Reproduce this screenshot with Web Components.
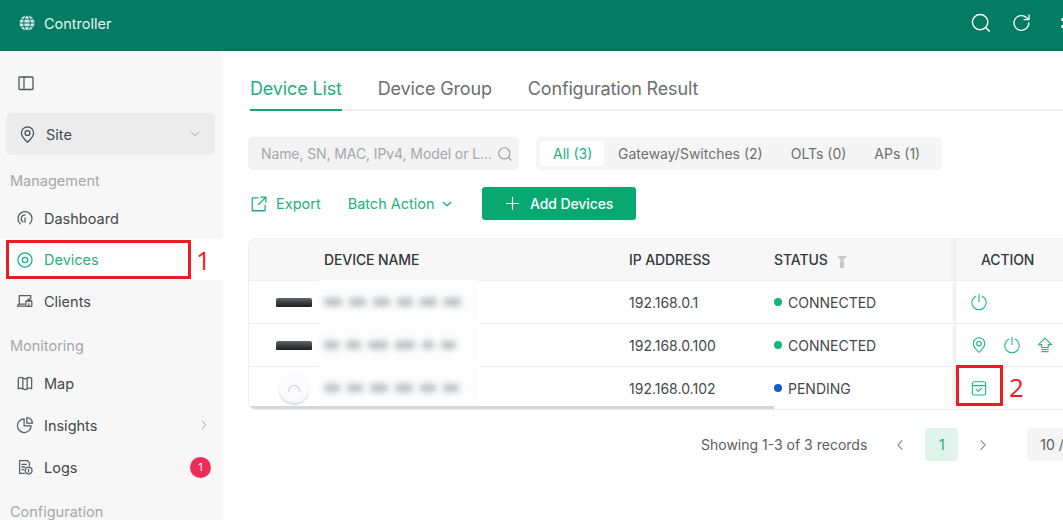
<!DOCTYPE html>
<html lang="en"><head><meta charset="utf-8"><title>Controller</title>
<style>
html,body{margin:0;padding:0;height:520px;overflow:hidden;background:#fff}
body{font-family:Inter,"Noto Sans",sans-serif;color:#3f4447}
</style></head><body>
<app-shell>
  <app-header slot="header"></app-header>
  <side-nav slot="nav"></side-nav>
  <device-page slot="main"></device-page>
</app-shell>
<script>
const P={
 panel:'<rect x="3" y="4" width="14" height="12.5" rx=".8"/><path d="M8 4v12.5"/>',
 pin:'<path d="M10 18.2C6 14.6 3.6 11.6 3.6 8.4a6.4 6.4 0 0 1 12.8 0c0 3.2-2.4 6.2-6.4 9.8z"/><circle cx="10" cy="8.4" r="2.6"/>',
 gauge:'<path d="M5 16.6A7.8 7.8 0 1 1 15 16.6"/><path d="M7.6 14.2A4.2 4.2 0 0 1 10 6.6"/><path d="M10 10v4.6"/>',
 target:'<circle cx="10" cy="10" r="7.8"/><circle cx="10" cy="10" r="3"/>',
 clients:'<path d="M3.6 13.5V4h12.8v3.5"/><path d="M1.8 15.8h8"/><path d="M1.8 15.8c0-1 .6-2.2 1.8-2.3h6"/><rect x="11" y="10" width="6.6" height="6" rx=".5"/><path d="M13.4 10V8h1.8v2M14.3 13v3"/>',
 map:'<path d="M2.6 4.4c2-.9 3.6-.9 5 0 0 0 1.500 1 2.400 1s2.400-1 2.400-1c1.400-.9 3-.9 5 0v12c-2-.9-3.600-.9-5 0 0 0-1.500 1-2.400 1s-2.400-1-2.400-1c-1.400-.9-3-.9-5 0z"/><path d="M7.600 4.400v12M12.400 4.400v12"/>',
 pie:'<path d="M9 3.200a7.600 7.600 0 1 0 7.800 7.800H9z"/><path d="M12 1.800a6.200 6.200 0 0 1 6.200 6.200H12z"/>',
 logs:'<path d="M9 17.200H4V2.800h8.600l2.400 2.600v3"/><path d="M6.600 7h5M6.600 10h3M6.600 13h1.800"/><circle cx="14" cy="14" r="3.800"/><path d="M14 12.600v3M13.400 12.800h.6"/>',
 search:'<circle cx="9.200" cy="9.200" r="7"/><path d="M14.400 14.400l3.200 3.200"/>',
 refresh:'<path d="M16.800 10A7.400 7.400 0 1 1 14.600 4.700l2 1.700"/><path d="M17 1.800v4.900h-4.900"/>',
 export:'<path d="M9 3.300H2.500v14.200h14.300v-6"/><path d="M9.500 10.500l8-8M12 2.300h5.700V8"/>',
 down:'<path d="M4.500 7.500l5.500 5 5.500-5"/>',
 right:'<path d="M7.500 4.500l5 5.500-5 5.500"/>',
 left:'<path d="M12.500 4.500l-5 5.500 5 5.500"/>',
 plus:'<path d="M10 3v14M3 10h14"/>',
 power:'<path d="M6.300 3.500a8 8 0 1 0 7.400 0"/><path d="M10 1.600v8"/>',
 upgrade:'<path d="M10 2.400l7.200 7.200h-3.600v3.200H6.400V9.600H2.800z"/><path d="M6.400 15h7.200M6.400 17.400h7.200"/>',
 confirm:'<rect x="2.600" y="3" width="14.800" height="14.800" rx="2.200"/><path d="M2.600 7.400h14.800" /><path d="M6.800 11.500l2.400 2.300 4-3.600"/>',
 globe:'<circle cx="10" cy="10" r="8.400" fill="currentColor" stroke="none"/><g stroke="#047b63" stroke-width="1.100"><path d="M1.800 10h16.400M3 5.800h14M3 14.200h14"/><ellipse cx="10" cy="10" rx="3.600" ry="8.400"/></g>'
};
class XIcon extends HTMLElement{
 connectedCallback(){
  if(this.shadowRoot)return;
  const s=this.getAttribute('size')||18,w=this.getAttribute('w')||1.4;
  this.attachShadow({mode:'open'}).innerHTML=`<style>:host{display:inline-flex;flex:none;width:${s}px;height:${s}px}svg{display:block;width:100%;height:100%}</style><svg viewBox="0 0 20 20" fill="none" stroke="currentColor" stroke-width="${w}" stroke-linecap="round" stroke-linejoin="round">${P[this.getAttribute('name')]}</svg>`;
 }
}
customElements.define('x-icon',XIcon);

class AppShell extends HTMLElement{
 constructor(){super();this.attachShadow({mode:'open'}).innerHTML=`<style>
 :host{display:grid;grid-template-columns:223px minmax(0,1fr);grid-template-rows:52px 468px;width:1063px;height:520px;overflow:hidden}
 ::slotted([slot=header]){grid-column:1/3}
 </style><slot name="header"></slot><slot name="nav"></slot><slot name="main"></slot>`;}
}
customElements.define('app-shell',AppShell);

class AppHeader extends HTMLElement{
 constructor(){super();this.attachShadow({mode:'open'}).innerHTML=`<style>
 :host{display:block;height:52px;box-sizing:border-box;border-bottom:1px solid #fff;overflow:hidden}
 .bar{height:51px;background:#047b63;display:flex;align-items:center;padding:0 0 5px 18px;color:#fff;width:1063px;box-sizing:border-box}
 .logo{color:#cfe9e2;display:flex}
 .t{font-size:14.500px;margin-left:8px;color:#e6f4f0}
 .r{margin-left:auto;display:flex;gap:20px;align-items:center;margin-right:-1px}
 .dots{display:grid;gap:4px;width:3px;margin-left:9px}.dots i{width:3px;height:3px;background:#fff;border-radius:50%}
 </style><div class="bar"><span class="logo"><x-icon name="globe" size="18"></x-icon></span><span class="t">Controller</span>
 <div class="r"><x-icon name="search" size="22" w="1.300"></x-icon><x-icon name="refresh" size="20" w="1.300"></x-icon><span class="dots"><i></i><i></i></span></div></div>`;}
}
customElements.define('app-header',AppHeader);

class NavItem extends HTMLElement{
 constructor(){super();
  this.attachShadow({mode:'open'}).innerHTML=`<style>
 :host{display:flex;align-items:center;height:42px;padding:0 12px 0 16px;font-size:14.500px;color:#44494c;gap:10px;box-sizing:border-box}
 :host([active]){background:#fff;color:#1fb081;height:41px}
 .i{display:flex;color:#5a5e60}:host([active]) .i{color:#1fb081}
 .e{margin-left:auto;display:flex;align-items:center;color:#9a9a9a}
 </style><span class="i"><x-icon name="${this.getAttribute('icon')}" size="18"></x-icon></span><slot></slot><span class="e"><slot name="end"></slot></span>`;}
}
customElements.define('nav-item',NavItem);

class SideNav extends HTMLElement{
 constructor(){super();this.attachShadow({mode:'open'}).innerHTML=`<style>
 :host{display:block;background:#f7f7f7;position:relative;overflow:hidden}
 .tg{height:61px;display:flex;align-items:center;padding-left:16px;color:#55595b}
 .site{margin:0 8px 0 6px;height:42px;background:#ececec;border-radius:5px;display:flex;align-items:center;padding:0 13px 0 12px;font-size:14.500px;color:#44494c;gap:9px}
 .site .d{margin-left:auto;color:#9a9a9a;display:flex}
 h4{margin:10px 0 0;height:32px;line-height:32px;font-weight:400;font-size:14.500px;color:#a4a7a9;padding-left:10px}
 h4.m{margin-top:8px}
 .badge{width:21px;height:21px;border-radius:50%;background:#ee2c5a;color:#fff;font-size:11px;display:flex;align-items:center;justify-content:center}
 .red{position:absolute;left:6px;top:188px;width:185px;height:39px;box-sizing:border-box;border:3px solid #ed1c24}
 .n{position:absolute;left:196px;top:193px;font:26px/30px "Open Sans",sans-serif;color:#ed1c24}
 </style>
 <div class="tg"><x-icon name="panel" size="20" w="1.300"></x-icon></div>
 <div class="site"><x-icon name="pin" size="19" w="1.300"></x-icon>Site<span class="d"><x-icon name="down" size="14" w="1.200"></x-icon></span></div>
 <h4>Management</h4>
 <nav-item icon="gauge">Dashboard</nav-item>
 <nav-item icon="target" active>Devices</nav-item>
 <nav-item icon="clients">Clients</nav-item>
 <h4 class="m">Monitoring</h4>
 <nav-item icon="map">Map</nav-item>
 <nav-item icon="pie">Insights<x-icon slot="end" name="right" size="14" w="1.200"></x-icon></nav-item>
 <nav-item icon="logs">Logs<span slot="end" class="badge">1</span></nav-item>
 <h4 class="m">Configuration</h4>
 <div class="red"></div><div class="n">1</div>`;}
}
customElements.define('side-nav',SideNav);

class TabBar extends HTMLElement{
 constructor(){super();this.attachShadow({mode:'open'}).innerHTML=`<style>
 :host{display:flex;height:59px;margin-left:2px;border-bottom:2px solid #f1f1f1;box-sizing:border-box;gap:36px;font-size:18px;align-items:stretch;color:#6b6f72}
 span{display:flex;align-items:center;padding-top:16px;height:41px;letter-spacing:-.15px}
 .a{color:#1fae7e;position:relative;box-shadow:0 2px 0 #12ab78}
 </style><span class="a">Device List</span><span>Device Group</span><span>Configuration Result</span>`;}
}
customElements.define('tab-bar',TabBar);

class FilterBar extends HTMLElement{
 constructor(){super();this.attachShadow({mode:'open'}).innerHTML=`<style>
 :host{display:flex;margin-top:26px;gap:17px;height:33px;font-size:14px}
 .s{width:271px;background:#f3f3f3;border-radius:5px;display:flex;align-items:center;padding:0 6px 0 13px;box-sizing:border-box;color:#a5a8aa;justify-content:space-between;letter-spacing:-.1px;flex:none}
 .s x-icon{color:#909396}
 .g{background:#f5f5f5;border-radius:5px;display:flex;align-items:center;padding:0 4px;color:#6b6f72;height:33px;box-sizing:border-box;width:406px;flex:none}
 .g span{padding:0 14px;height:25px;display:flex;align-items:center;white-space:nowrap}
 .g span:first-child{background:#fff;color:#1fae7e;border-radius:3px;padding:0 13px;width:64px;box-sizing:border-box}
 </style><div class="s"><span>Name, SN, MAC, IPv4, Model or L...</span><x-icon name="search" size="16" w="1.300"></x-icon></div>
 <div class="g"><span>All (3)</span><span>Gateway/Switches (2)</span><span>OLTs (0)</span><span>APs (1)</span></div>`;}
}
customElements.define('filter-bar',FilterBar);

class ActionBar extends HTMLElement{
 constructor(){super();this.attachShadow({mode:'open'}).innerHTML=`<style>
 :host{display:flex;align-items:center;margin-top:17px;height:33px;font-size:14.500px;color:#1fae7e;padding-left:2px}
 .e{display:flex;align-items:center;gap:8px}
 .b{display:flex;align-items:center;gap:5px;margin-left:27px}
 .add{margin-left:28px;width:154px;height:33px;border-radius:3px;background:#08a870;color:#fff;display:flex;align-items:center;justify-content:center;gap:9px;font-size:14px;font-weight:500;letter-spacing:-.1px}
 </style><span class="e"><x-icon name="export" size="18" w="1.400"></x-icon>Export</span>
 <span class="b">Batch Action<x-icon name="down" size="14" w="2"></x-icon></span>
 <span class="add"><x-icon name="plus" size="17" w="1.400"></x-icon>Add Devices</span>`;}
}
customElements.define('action-bar',ActionBar);

class DevThumb extends HTMLElement{
 constructor(){super();const k=this.getAttribute('kind');this.attachShadow({mode:'open'}).innerHTML=`<style>
 :host{display:flex;align-items:center;justify-content:center;width:100%;height:100%;padding-left:14px;box-sizing:border-box}
 .sw{width:36px;height:9px;border-radius:2px 2px 1px 1px;background:linear-gradient(#63686a,#33383a 60%,#1e2123)}
 .ap{width:30px;height:30px;border-radius:50%;background:radial-gradient(circle at 50% 42%,#fbfbfd 60%,#e3e6ee);box-shadow:0 2px 2px #d8dbe2;display:flex;align-items:center;justify-content:center}
 .ap i{width:10px;height:6px;border:1px solid #cdd0d6;border-bottom:0;border-radius:6px 6px 0 0}
 </style>${k==='ap'?'<div class="ap"><i></i></div>':'<div class="sw"></div>'}`;}
}
customElements.define('dev-thumb',DevThumb);

class BlurName extends HTMLElement{
 constructor(){super();const w=(this.getAttribute('w')||'').split(',');this.attachShadow({mode:'open'}).innerHTML=`<style>
 :host{position:absolute;left:-5px;top:-1px;bottom:-1px;width:159px;background:#fdfdfd;display:flex;align-items:center;gap:7px;padding-left:5px;box-sizing:border-box}
 i{height:8px;width:var(--w);background:#b9bbbd;filter:blur(3px);display:block;border-radius:3px}
 </style>${w.map(x=>`<i style="--w:${x}px"></i>`).join('')}`;}
}
customElements.define('blur-name',BlurName);

class DevTable extends HTMLElement{
 constructor(){super();
 const row=(thumb,w,ip,dot,st,act)=>`<div class="r"><div><dev-thumb kind="${thumb}"></dev-thumb></div><div class="nm"><blur-name w="${w}"></blur-name></div><div>${ip}</div><div class="st"><i style="background:${dot}"></i>${st}</div><div class="ac">${act}</div></div>`;
 const ic=n=>`<x-icon name="${n}" size="18" w="1.200"></x-icon>`;
 this.attachShadow({mode:'open'}).innerHTML=`<style>
 :host{display:block;margin-top:18px;width:850px;position:relative;font-size:14px;color:#44494c}
 .box{border:1px solid #eeeeee;border-right:0;border-radius:8px 0 0 8px;overflow:hidden;position:relative}
 .r{display:grid;grid-template-columns:75px 305px 145px 181px 1fr;height:43px;align-items:center;border-top:1px solid #eeeeee;box-sizing:border-box}
 .r>div{display:flex;align-items:center;height:100%;box-sizing:border-box;position:relative}
 .h{height:41px;border-top:0;background:#f7f7f7;font-weight:500;color:#33383c;letter-spacing:-.1px}
 .nm{z-index:1}
 .st{gap:6px}.st i{width:8px;height:8px;border-radius:50%;display:block}
 .h .st{gap:0}.f{margin-left:9px;width:0;height:0}
 .f{border-left:5px solid transparent;border-right:5px solid transparent;border-top:6px solid #c9c9c9;position:relative;top:-1px}
 .f::after{content:"";position:absolute;left:-2px;top:-1px;width:4px;height:7px;background:#c9c9c9}
 .ac{padding-left:14px;gap:15px;color:#1fb584;box-shadow:-3px 0 3px -1px #ececec;border-left:1px solid #eeeeee}
 .h .ac{padding-left:25px;color:#33383c}
 .sb{position:absolute;left:0;bottom:0;width:525px;height:3px;background:#d6d6d6;z-index:2;border-radius:0 0 0 8px}
 .redbox{position:absolute;left:708px;top:127px;width:47px;height:41px;box-sizing:border-box;border:3px solid #ed1c24;z-index:3}
 .n2{position:absolute;left:761px;top:134px;font:26px/30px "Open Sans",sans-serif;color:#ed1c24;z-index:3}
 </style><div class="box">
 <div class="r h"><div></div><div>DEVICE NAME</div><div>IP ADDRESS</div><div class="st">STATUS<span class="f"></span></div><div class="ac">ACTION</div></div>
 ${row('sw','44,30,30,30,30,44'.replace('44,30,30,30,30,44','18,17,17,16,17,17'),'192.168.0.1','#13b67a','CONNECTED',ic('power'))}
 ${row('sw','15,15,20,20,12,15','192.168.0.100','#13b67a','CONNECTED',ic('pin')+ic('power')+ic('upgrade'))}
 ${row('ap','16,16,18,18,16,16','192.168.0.102','#0b5ed0','PENDING',ic('confirm'))}
 <div class="sb"></div></div>
 <div class="redbox"></div><div class="n2">2</div>`;}
}
customElements.define('dev-table',DevTable);

class PagerBar extends HTMLElement{
 constructor(){super();this.attachShadow({mode:'open'}).innerHTML=`<style>
 :host{display:flex;align-items:center;margin-top:18px;height:33px;font-size:14px;color:#5a5e61;padding-left:453px;width:700px}
 .c{display:flex;margin-left:25px;color:#8a8d90}
 .p{width:33px;height:33px;border-radius:4px;background:#e1f4ec;color:#1fae7e;display:flex;align-items:center;justify-content:center;margin:0 17px 0 17px}
 .z{margin-left:36px;width:80px;height:33px;background:#f4f4f4;border-radius:4px;display:flex;align-items:center;padding-left:13px;box-sizing:border-box;flex:none}
 </style><span>Showing 1-3 of 3 records</span><span class="c"><x-icon name="left" size="16"></x-icon></span><span class="p">1</span><span class="c" style="margin:0"><x-icon name="right" size="16"></x-icon></span><span class="z">10 /page</span>`;}
}
customElements.define('pager-bar',PagerBar);

class DevicePage extends HTMLElement{
 constructor(){super();this.attachShadow({mode:'open'}).innerHTML=`<style>
 :host{display:block;padding-left:25px;overflow:hidden;min-width:0}
 </style><tab-bar></tab-bar><filter-bar></filter-bar><action-bar></action-bar><dev-table></dev-table><pager-bar></pager-bar>`;}
}
customElements.define('device-page',DevicePage);
</script>
</body></html>
